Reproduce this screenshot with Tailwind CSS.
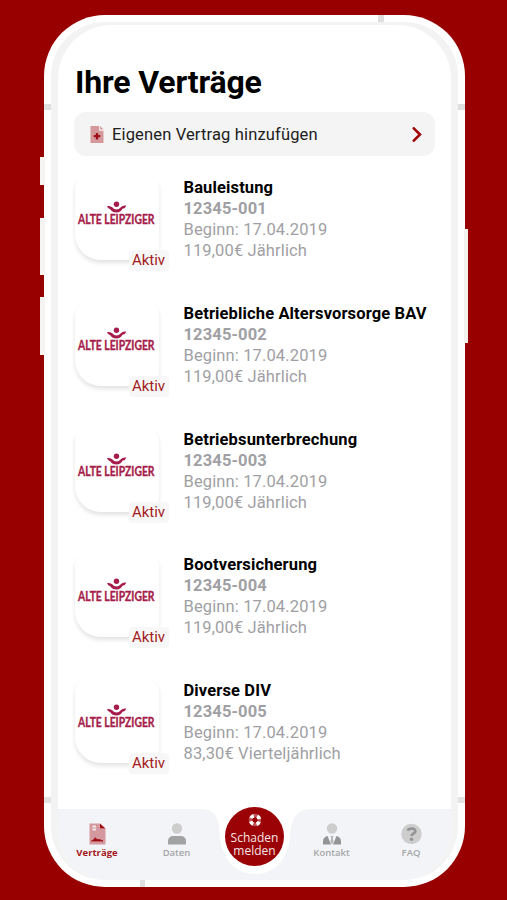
<!DOCTYPE html>
<html lang="de">
<head>
<meta charset="utf-8">
<title>Ihre Verträge</title>
<script src="https://cdn.jsdelivr.net/npm/@tailwindcss/browser@4"></script>
</head>
<body class="bg-[#980000] w-[507px] h-[900px] overflow-hidden pt-[15px] pl-[43.500px] font-['Roboto',sans-serif]">
<main class="relative w-[421px] h-[872px] bg-white rounded-[61px] pt-[7px] px-[7px] pb-[7px]">
  <div class="absolute left-0 top-[89px] w-[7px] h-[6px] bg-[#dfdfdf]"></div>
  <div class="absolute right-0 top-[89px] w-[7px] h-[6px] bg-[#dfdfdf]"></div>
  <div class="absolute left-[334px] top-0 w-[6px] h-[7px] bg-[#dfdfdf]"></div>
  <div class="absolute left-[96px] bottom-0 w-[5px] h-[7px] bg-[#dfdfdf]"></div>
  <div class="absolute left-0 top-[782px] w-[7px] h-[6px] bg-[#e3e3e3]"></div>
  <div class="absolute right-0 top-[782px] w-[7px] h-[6px] bg-[#e3e3e3]"></div>
  <div class="absolute left-[-3.500px] top-[142px] w-[5px] h-[28px] bg-[#f6f4f2]"></div>
  <div class="absolute left-[-3.500px] top-[203px] w-[5px] h-[57px] bg-[#f6f4f2]"></div>
  <div class="absolute left-[-3.500px] top-[282px] w-[5px] h-[58px] bg-[#f6f4f2]"></div>
  <div class="absolute right-[-3px] top-[214px] w-[4px] h-[114px] bg-[#f3f1ee]"></div>

  <div class="h-full bg-[#f3f3f4] rounded-[54px] overflow-hidden pt-[3px] px-[7px]">
    <div class="h-full bg-white rounded-t-[54px] rounded-b-[50px] overflow-hidden flex flex-col">
      <div class="flex-1 pl-[17.500px] pr-[15.500px] pt-[37px]">
        <h1 class="text-[32px] leading-[40px] font-bold text-black tracking-[-0.15px] whitespace-nowrap">Ihre Verträge</h1>
        <button class="mt-[10px] -ml-px w-[361px] h-[44px] rounded-[12px] bg-[#f4f4f4] flex items-center pl-[16px] pr-[13px] text-[#202020]">
          <svg class="w-[14px] h-[17px]" viewBox="0 0 14 17"><path d="M.5 0h8.700v4.800H13.500V17H.5z" fill="#d5989b"/><path d="M10.200 0l3.300 3.600h-3.300z" fill="#d5989b"/><path d="M7 6.900v6.600M3.700 10.200h6.600" stroke="#a0101a" stroke-width="2.200"/></svg>
          <span class="ml-[8px] pt-px text-[16.500px] leading-[20px] tracking-[0.150px] whitespace-nowrap">Eigenen Vertrag hinzufügen</span>
          <svg class="ml-auto w-[10px] h-[15px]" viewBox="0 0 10 15"><path d="M1.800 1.300l6.200 6.200-6.200 6.200" fill="none" stroke="#a00508" stroke-width="2.600" stroke-linecap="round"/></svg>
        </button>
        <ul id="contracts" class="pt-[20px]"></ul>
      </div>
      <nav class="relative h-[71px] shrink-0 text-[#a4a6a9] font-['Open_Sans','Noto_Sans',sans-serif] text-[9.500px] leading-[12px] font-semibold">
        <svg class="absolute left-0 top-0 w-[394px] h-[71px]" viewBox="0 0 394 71"><path d="M0 0H142Q158 0 161 15C162 24 161 32 165 41Q174 65 197 65T229 41C233 32 231 24 234 15Q238 0 254 0H394V71H0z" fill="#f3f4f7"/></svg>
        <div class="relative h-full flex">
          <div class="w-[79px] flex flex-col items-center pt-[14px] text-[#a31421] font-bold">
            <svg class="w-[17px] h-[22px]" viewBox="0 0 17 22"><path d="M.5.500H11v5h5.500v16H.5z" fill="#d4999f"/><path d="M11 .5l5.500 5H11z" fill="#a00c15"/><path d="M3.500 3.500h3.500M3.500 6.500h3.500" stroke="#f5e7e8" stroke-width="1.800"/><path d="M2.500 18q2.500-.8 3.700-3.300.8 1.600 2.300 1.700 2.500-.2 5.500 1.600z" fill="#a00c15" stroke="#a00c15" stroke-width=".8"/></svg>
            <span class="mt-[2px]">Verträge</span>
          </div>
          <div class="w-[80px] flex flex-col items-center pt-[14px]">
            <svg class="w-[18px] h-[22px]" viewBox="0 0 18 22"><circle cx="9" cy="5.500" r="5.200" fill="#cdcdce"/><path d="M0 21.500v-3q0-5.500 5.500-5.500h7q5.500 0 5.500 5.500v3z" fill="#a2a2a3"/></svg>
            <span class="mt-[2px]">Daten</span>
          </div>
          <div class="w-[75px]"></div>
          <div class="w-[80px] flex flex-col items-center pt-[14px]">
            <svg class="w-[18px] h-[22px]" viewBox="0 0 18 22"><circle cx="9" cy="5.500" r="5.200" fill="#cdcdce"/><path d="M0 21.500v-3q0-4.500 4.500-5.500L8 21.500zM18 21.500v-3q0-4.500-4.500-5.500L10 21.500z" fill="#949495"/><path d="M7.500 13h3l-.7 2 .7 3.500-1.500 3-1.500-3 .7-3.500z" fill="#b4b4b5"/></svg>
            <span class="mt-[2px]">Kontakt</span>
          </div>
          <div class="w-[79px] flex flex-col items-center pt-[14px]">
            <svg class="w-[21px] h-[22px]" viewBox="0 0 21 22"><circle cx="10.500" cy="11" r="10.200" fill="#cdcdce"/><path d="M6.800 7.800q.7-2.300 3.900-2.300 3.600.2 3.600 2.700 0 1.500-2 2.500-1.700.9-1.700 2.300" fill="none" stroke="#949496" stroke-width="2.700"/><circle cx="10.500" cy="16.300" r="1.700" fill="#949496"/></svg>
            <span class="mt-[2px]">FAQ</span>
          </div>
        </div>
        <div class="absolute left-[167.500px] top-[-2.500px] w-[59px] h-[59px] rounded-full bg-[#9a0205] text-[#f6e4e4] flex flex-col items-center pt-[6px] text-[12px] leading-[13px] font-medium">
          <svg class="w-[14px] h-[14px] shrink-0" viewBox="0 0 14 14"><circle cx="7" cy="7" r="4.500" fill="none" stroke="#bf5557" stroke-width="3.400"/><circle cx="7" cy="7" r="4.500" fill="none" stroke="#fff" stroke-width="3.600" stroke-dasharray="3.534 3.534" stroke-dashoffset="-1.767"/></svg>
          <p class="mt-[4px] text-center">Schaden<br>melden</p>
        </div>
      </nav>
    </div>
  </div>
</main>
<template id="row">
  <li class="h-[125.750px] flex">
    <div class="relative w-[84px] h-[84px] rounded-[13px] rounded-bl-[26px] bg-white shadow-[0_3px_4px_rgba(0,0,0,0.11)] pt-[25px] pl-[2.500px]">
      <svg class="w-[78px] h-[30px] overflow-visible" viewBox="0 0 78 30" fill="#a61c4a">
        <circle cx="38.500" cy="3.200" r="2.700"/>
        <path d="M29 5q4-.5 5.500 1.500 1.500 2 4 2t4-2q2-2.500 5.800-2-.7 2.800-3.800 3.300-1.700 3.700-6 3.700-4.500 0-6-3-2.800-.6-3.500-3.500z"/>
        <text x="0" y="23.200" font-family="Lato, sans-serif" font-weight="700" font-size="12.300" stroke="#a61c4a" stroke-width=".35" textLength="76.500" lengthAdjust="spacingAndGlyphs">ALTE LEIPZIGER</text>
      </svg>
      <span class="absolute left-[53.500px] top-[74px] w-[40px] h-[21px] rounded-[4px] bg-[#f7f7f7] text-[#a31c22] text-[15px] leading-[21px] text-center">Aktiv</span>
    </div>
    <div class="ml-[24.500px] pt-px text-[16.500px] leading-[21px] tracking-[0.130px] text-[#a0a0a4] whitespace-nowrap">
      <p data-name class="font-bold text-black"></p>
      <p data-number class="font-bold"></p>
      <p>Beginn: 17.04.2019</p>
      <p data-price></p>
    </div>
  </li>
</template>
<script>
const rows = [
  ["Bauleistung", "12345-001", "119,00€ Jährlich"],
  ["Betriebliche Altersvorsorge BAV", "12345-002", "119,00€ Jährlich"],
  ["Betriebsunterbrechung", "12345-003", "119,00€ Jährlich"],
  ["Bootversicherung", "12345-004", "119,00€ Jährlich"],
  ["Diverse DIV", "12345-005", "83,30€ Vierteljährlich"]
];
for (const [name, number, price] of rows) {
  const item = document.getElementById("row").content.cloneNode(true);
  item.querySelector("[data-name]").textContent = name;
  item.querySelector("[data-number]").textContent = number;
  item.querySelector("[data-price]").textContent = price;
  document.getElementById("contracts").append(item);
}
</script>
</body>
</html>
